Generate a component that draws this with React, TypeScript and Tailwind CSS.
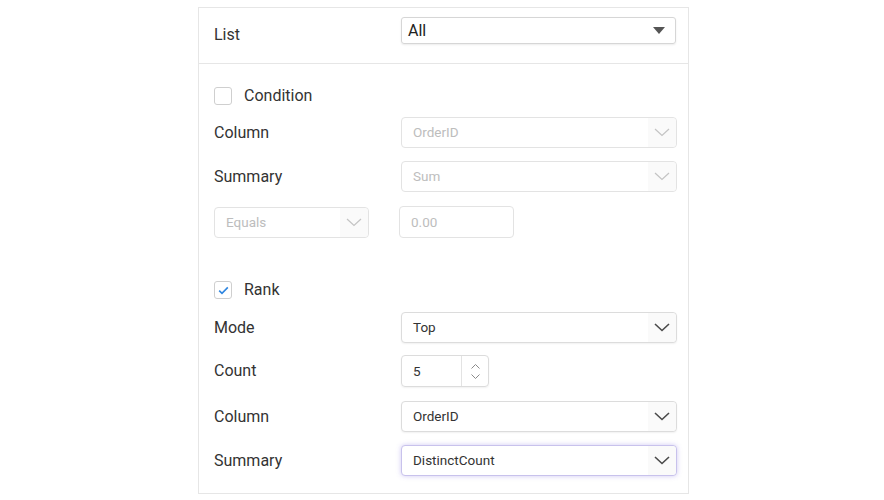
const font = { fontFamily: "Roboto, 'Liberation Sans', sans-serif" };

function Chevron({ disabled }: { disabled?: boolean }) {
  return (
    <svg width="16" height="9" viewBox="0 0 16 9" fill="none">
      <path
        d="M1 1l7 6.5L15 1"
        stroke={disabled ? "#c4c4c4" : "#4a4a4a"}
        strokeWidth={disabled ? 1.2 : 1.6}
      />
    </svg>
  );
}

function Select({
  value,
  disabled,
  focused,
  className = "",
}: {
  value: string;
  disabled?: boolean;
  focused?: boolean;
  className?: string;
}) {
  const border = focused
    ? "border-[#c8c2ec] shadow-[0_0_5px_rgba(120,100,220,0.35)]"
    : disabled
    ? "border-[#e3e3e3]"
    : "border-[#dcdcdc] shadow-[0_1px_2px_rgba(0,0,0,0.06)]";
  return (
    <div className={`flex h-[31px] items-stretch rounded-[4px] border bg-white ${border} ${className}`}>
      <span
        className={`flex flex-1 items-center pl-[11px] text-[13.5px] ${
          disabled ? "text-[#bdbdbd]" : "text-[#333]"
        }`}
      >
        {value}
      </span>
      <span className="flex w-[28px] items-center justify-center rounded-r-[4px] bg-[#fafafa]">
        <Chevron disabled={disabled} />
      </span>
    </div>
  );
}

function Checkbox({ checked, label }: { checked?: boolean; label: string }) {
  return (
    <div className="flex h-[18px] items-center gap-[12px]">
      <span className="flex h-[18px] w-[18px] items-center justify-center rounded-[3px] border border-[#cfcfcf] bg-white">
        {checked && (
          <svg width="11" height="9" viewBox="0 0 11 9" fill="none">
            <path d="M1.2 4.6l2.8 2.8L9.8 1.4" stroke="#2f86e0" strokeWidth="1.6" />
          </svg>
        )}
      </span>
      <span className="text-[16px] leading-[18px] text-[#333]">{label}</span>
    </div>
  );
}

function Row({ label, children, className = "" }: { label: string; children: React.ReactNode; className?: string }) {
  return (
    <div className={`flex items-center ${className}`}>
      <span className="w-[187px] text-[16px] text-[#333]">{label}</span>
      <div className="flex-1">{children}</div>
    </div>
  );
}

export default function App() {
  return (
    <div className="flex h-[500px] w-[884px] justify-center bg-white pt-[7px]" style={font}>
      <div className="ml-[3px] flex h-[487px] w-[491px] flex-col border border-[#e6e6e6]">
        <div className="flex h-[56px] items-start border-b border-[#e6e6e6] pl-[15px] pr-[12px] pt-[9px]">
          <span className="w-[187px] pt-[4px] text-[16px] leading-[27px] text-[#333]">List</span>
          <div className="flex h-[27px] flex-1 items-center justify-between rounded-[3px] border border-[#d6d6d6] pl-[6px] pr-[10px] shadow-[0_1px_2px_rgba(0,0,0,0.08)]">
            <span className="text-[16px] text-[#222]">All</span>
            <svg width="12" height="7" viewBox="0 0 12 7">
              <path d="M0 0h12L6 7z" fill="#555" />
            </svg>
          </div>
        </div>

        <div className="flex flex-col pl-[15px] pr-[11px] pt-[23px]">
          <Checkbox label="Condition" />
          <Row label="Column" className="mt-[12px]">
            <Select value="OrderID" disabled />
          </Row>
          <Row label="Summary" className="mt-[13px]">
            <Select value="Sum" disabled />
          </Row>
          <div className="mt-[14px] flex items-center gap-[30px]">
            <Select value="Equals" disabled className="w-[155px]" />
            <div className="flex h-[32px] w-[115px] items-center rounded-[4px] border border-[#e3e3e3] pl-[11px] text-[13.5px] text-[#bdbdbd]">
              0.00
            </div>
          </div>

          <div className="mt-[43px]">
            <Checkbox checked label="Rank" />
          </div>
          <Row label="Mode" className="mt-[13px]">
            <Select value="Top" />
          </Row>
          <Row label="Count" className="mt-[12px]">
            <div className="flex h-[32px] w-[88px] items-stretch rounded-[4px] border border-[#dcdcdc] shadow-[0_1px_2px_rgba(0,0,0,0.06)]">
              <span className="flex flex-1 items-center pl-[11px] text-[13.5px] text-[#333]">5</span>
              <span className="flex w-[27px] flex-col items-center justify-center gap-[5px] border-l border-[#e3e3e3]">
                <svg width="9" height="5" viewBox="0 0 9 5" fill="none">
                  <path d="M0.5 4.5l4-4 4 4" stroke="#8a8a8a" strokeWidth="1" />
                </svg>
                <svg width="9" height="5" viewBox="0 0 9 5" fill="none">
                  <path d="M0.5 0.5l4 4 4-4" stroke="#8a8a8a" strokeWidth="1" />
                </svg>
              </span>
            </div>
          </Row>
          <Row label="Column" className="mt-[14px]">
            <Select value="OrderID" />
          </Row>
          <Row label="Summary" className="mt-[13px]">
            <Select value="DistinctCount" focused />
          </Row>
        </div>
      </div>
    </div>
  );
}
